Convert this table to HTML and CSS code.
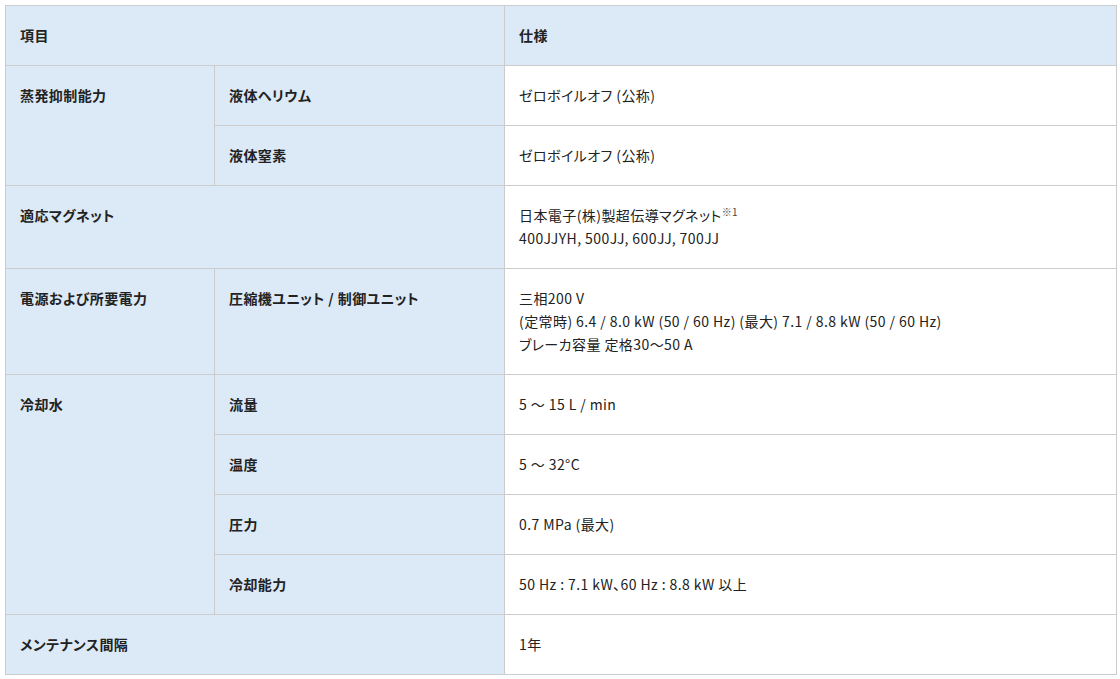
FILE: index.html
```html
<!DOCTYPE html>
<html lang="ja">
<head>
<meta charset="utf-8">
<link rel="stylesheet" href="styles.css">
</head>
<body>
<table class="spec">
  <colgroup>
    <col class="c1"><col class="c2"><col class="c3">
  </colgroup>
  <thead>
    <tr><th colspan="2">項目</th><th class="hv">仕様</th></tr>
  </thead>
  <tbody>
    <tr><th rowspan="2">蒸発抑制能力</th><th>液体ヘリウム</th><td>ゼロボイルオフ (公称)</td></tr>
    <tr><th>液体窒素</th><td>ゼロボイルオフ (公称)</td></tr>
    <tr><th colspan="2">適応マグネット</th><td>日本電子(株)製超伝導マグネット<sup>※1</sup><br>400JJYH, 500JJ, 600JJ, 700JJ</td></tr>
    <tr><th>電源および所要電力</th><th>圧縮機ユニット / 制御ユニット</th><td>三相200 V<br>(定常時) 6.4 / 8.0 kW (50 / 60 Hz) (最大) 7.1 / 8.8 kW (50 / 60 Hz)<br>ブレーカ容量 定格30～50 A</td></tr>
    <tr><th rowspan="4">冷却水</th><th>流量</th><td>5 ～ 15 L / min</td></tr>
    <tr><th>温度</th><td>5 ～ 32°C</td></tr>
    <tr><th>圧力</th><td>0.7 MPa (最大)</td></tr>
    <tr><th>冷却能力</th><td>50 Hz : 7.1 kW、60 Hz : 8.8 kW 以上</td></tr>
    <tr><th colspan="2">メンテナンス間隔</th><td>1年</td></tr>
  </tbody>
</table>
</body>
</html>
```
FILE: styles.css
```css
html, body {
  margin: 0;
  padding: 0;
  background: #fff;
}
body {
  padding: 5px 4px 0 5px;
  font-family: "Noto Sans CJK JP", "Noto Sans", sans-serif;
  font-size: 14px;
  letter-spacing: 0.03em;
  font-feature-settings: "palt";
  color: #222;
}
.spec {
  border-collapse: collapse;
  width: 1111px;
  table-layout: fixed;
}
.c1 { width: 209px; }
.c2 { width: 290px; }
.c3 { width: 612px; }
.spec th, .spec td {
  border: 1px solid #cccccc;
  padding: 18px 14px;
  line-height: 23px;
  text-align: left;
  vertical-align: top;
}
.spec th {
  background: #dce9f6;
  font-weight: 700;
}
.spec td {
  background: #fff;
  font-weight: 400;
}
.spec thead th.hv {
  background: #dce9f6;
}
.spec sup {
  font-size: 10px;
  line-height: 0;
  vertical-align: 5px;
  color: #444;
}
```
